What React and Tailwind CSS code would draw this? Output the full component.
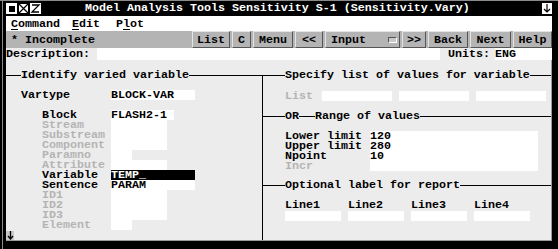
import React from "react";

const mono = "font-['Liberation_Mono',monospace] font-bold text-[11.67px]";

function Header({ pre, children }) {
  return (
    <div className="flex items-center h-[10px] leading-[10px]">
      <div className={"h-px bg-black " + pre}></div>
      <span className="whitespace-pre">{children}</span>
      <div className="flex-1 h-px bg-black"></div>
    </div>
  );
}

function LeftRow({ label, dim, w, value, dark }) {
  return (
    <div className="flex h-[10px] leading-[10px]">
      <div className={"w-[105px] pl-[36px] whitespace-pre " + (dim ? "text-[#b4b4b4]" : "text-black")}>{label}</div>
      <div className={w + " whitespace-pre " + (dark ? "bg-black text-white" : "bg-white text-black")}>{value}</div>
    </div>
  );
}

function Btn({ w, children }) {
  return (
    <div className={"h-full flex items-center justify-center bg-[#b4b4b4] border border-t-[#e4e4e4] border-l-[#e4e4e4] border-b-[#555555] border-r-[#555555] " + w}>
      {children}
    </div>
  );
}

export default function App() {
  const leftRows = [
    { label: "Block", w: "w-[63px]", value: "FLASH2-1" },
    { label: "Stream", dim: true, w: "w-[56px]" },
    { label: "Substream", dim: true, w: "w-[56px]" },
    { label: "Component", dim: true, w: "w-[56px]" },
    { label: "Paramno", dim: true, w: "w-[21px]" },
    { label: "Attribute", dim: true, w: "w-[56px]" },
    { label: "Variable", w: "w-[84px]", value: "TEMP_", dark: true },
    { label: "Sentence", w: "w-[84px]", value: "PARAM" },
    { label: "ID1", dim: true, w: "w-[56px]" },
    { label: "ID2", dim: true, w: "w-[56px]" },
    { label: "ID3", dim: true, w: "w-[56px]" },
    { label: "Element", dim: true, w: "w-[21px]" },
  ];

  return (
    <div className={"w-[558px] h-[249px] bg-black flex border-t border-[#8a8a8a] " + mono}>
      {/* left frame */}
      <div className="w-[6px] flex">
        <div className="w-[2px]"></div>
        <div className="w-px bg-[#8a8a8a]"></div>
      </div>

      <div className="w-[546px] flex flex-col">
        {/* title bar */}
        <div className="h-[15px] flex items-center text-white leading-[15px]">
          <div className="flex gap-px">
            <div className="w-[11px] h-[11px] bg-white flex items-center justify-center">
              <div className="w-[6px] h-[6px] bg-black"></div>
            </div>
            <svg width="11" height="11" viewBox="0 0 11 11" className="bg-white">
              <path d="M1 1 L10 10 M10 1 L1 10" stroke="black" strokeWidth="1.2" fill="none" />
              <rect x="0.5" y="0.5" width="10" height="10" stroke="black" fill="none" strokeWidth="1" />
            </svg>
            <svg width="11" height="11" viewBox="0 0 11 11" className="bg-white">
              <path d="M2 2 H9 L2 9 H9" stroke="black" strokeWidth="1.3" fill="none" />
            </svg>
          </div>
          <span className="ml-[44px] whitespace-pre">Model Analysis Tools Sensitivity S-1 (Sensitivity.Vary)</span>
          <div className="flex-1"></div>
          <svg width="10" height="11" viewBox="0 0 10 11" className="bg-white">
            <path d="M5 1 V9 M2 6 L5 9 L8 6" stroke="black" strokeWidth="1.2" fill="none" />
          </svg>
        </div>

        {/* menu bar */}
        <div className="h-[15px] bg-white flex pt-px leading-[14px] text-black">
          <span className="ml-[5px]"><span className="underline underline-offset-2">C</span>ommand</span>
          <span className="ml-[12px]"><span className="underline underline-offset-2">E</span>dit</span>
          <span className="ml-[16px]">P<span className="underline underline-offset-2">l</span>ot</span>
        </div>

        {/* toolbar */}
        <div className="h-[17px] bg-[#b4b4b4] flex text-black leading-[14px]">
          <div className="w-[186px] flex items-center pl-[5px] whitespace-pre">* Incomplete</div>
          <div className="flex gap-[2px] h-full">
            <Btn w="w-[38px]">List</Btn>
            <Btn w="w-[19px]">C</Btn>
            <Btn w="w-[40px]">Menu</Btn>
            <Btn w="w-[28px]">&lt;&lt;</Btn>
            <div className="h-full w-[75px] flex items-center bg-[#b4b4b4] border border-t-[#e4e4e4] border-l-[#e4e4e4] border-b-[#555555] border-r-[#555555] pl-[5px]">
              <span>Input</span>
              <div className="ml-[22px] w-[9px] h-[6px] bg-[#c8c8c8] border border-t-[#555555] border-l-[#555555] border-b-white border-r-white"></div>
            </div>
            <Btn w="w-[24px]">&gt;&gt;</Btn>
            <Btn w="w-[40px]">Back</Btn>
            <Btn w="w-[41px]">Next</Btn>
            <Btn w="w-[39px]">Help</Btn>
          </div>
        </div>

        {/* description row */}
        <div className="h-[12px] flex leading-[12px] text-black">
          <div className="w-[91px] bg-[#ececec]">Description:</div>
          <div className="flex-1 bg-white"></div>
          <div className="w-[55px] bg-[#ececec] pl-[8px]">Units:</div>
          <div className="w-[57px] bg-white">ENG</div>
        </div>

        {/* main */}
        <div className="h-[181px] bg-[#ececec] flex pt-[10px] text-black border-b border-[#9a9a9a] border-r">
          {/* left panel */}
          <div className="w-[256px] flex flex-col">
            <Header pre="w-[15px]">Identify varied variable</Header>
            <div className="h-[11px]"></div>
            <div className="flex h-[10px] leading-[10px]">
              <div className="w-[105px] pl-[15px]">Vartype</div>
              <div className="w-[84px] bg-white">BLOCK-VAR</div>
            </div>
            <div className="h-[10px]"></div>
            {leftRows.map((r) => (
              <LeftRow key={r.label} {...r} />
            ))}
            <div className="mt-px w-[8px] h-[9px] bg-[#c8c8c8] flex items-center justify-center">
              <svg width="7" height="9" viewBox="0 0 7 9">
                <path d="M3.5 0 V8 M1 5 L3.5 8 L6 5" stroke="black" strokeWidth="1.3" fill="none" />
              </svg>
            </div>
          </div>

          {/* right panel */}
          <div className="flex-1 flex flex-col mt-[5px] border-l border-black">
            <div className="-mt-[5px]">
              <Header pre="w-[22px]">Specify list of values for variable</Header>
            </div>
            <div className="h-[11px]"></div>
            <div className="flex h-[10px] leading-[10px] pl-[22px]">
              <div className="w-[37px] text-[#b4b4b4]">List</div>
              <div className="flex gap-[7px]">
                <div className="w-[70px] bg-white"></div>
                <div className="w-[70px] bg-white"></div>
                <div className="w-[70px] bg-white"></div>
              </div>
            </div>
            <div className="h-[10px]"></div>
            <div className="flex items-center h-[10px] leading-[10px]">
              <div className="h-px bg-black w-[22px]"></div>
              <span>OR</span>
              <div className="h-px bg-black w-[16px]"></div>
              <span className="whitespace-pre">Range of values</span>
              <div className="flex-1 h-px bg-black"></div>
            </div>
            <div className="h-[10px]"></div>
            <div className="flex pl-[22px] leading-[10px]">
              <div className="w-[85px] flex flex-col">
                <div className="h-[10px] whitespace-pre">Lower limit</div>
                <div className="h-[10px] whitespace-pre">Upper limit</div>
                <div className="h-[10px]">Npoint</div>
                <div className="h-[10px] text-[#b4b4b4]">Incr</div>
              </div>
              <div className="w-[168px] bg-white flex flex-col">
                <div className="h-[10px]">120</div>
                <div className="h-[10px]">280</div>
                <div className="h-[10px]">10</div>
                <div className="h-[10px]"></div>
              </div>
            </div>
            <div className="h-[9px]"></div>
            <Header pre="w-[22px]">Optional label for report</Header>
            <div className="h-[10px]"></div>
            <div className="flex gap-[7px] pl-[22px] leading-[10px]">
              {["Line1", "Line2", "Line3", "Line4"].map((l) => (
                <div key={l} className="w-[56px] flex flex-col gap-px">
                  <div className="h-[10px]">{l}</div>
                  <div className="h-[10px] bg-white"></div>
                </div>
              ))}
            </div>
          </div>
        </div>
      </div>
    </div>
  );
}
